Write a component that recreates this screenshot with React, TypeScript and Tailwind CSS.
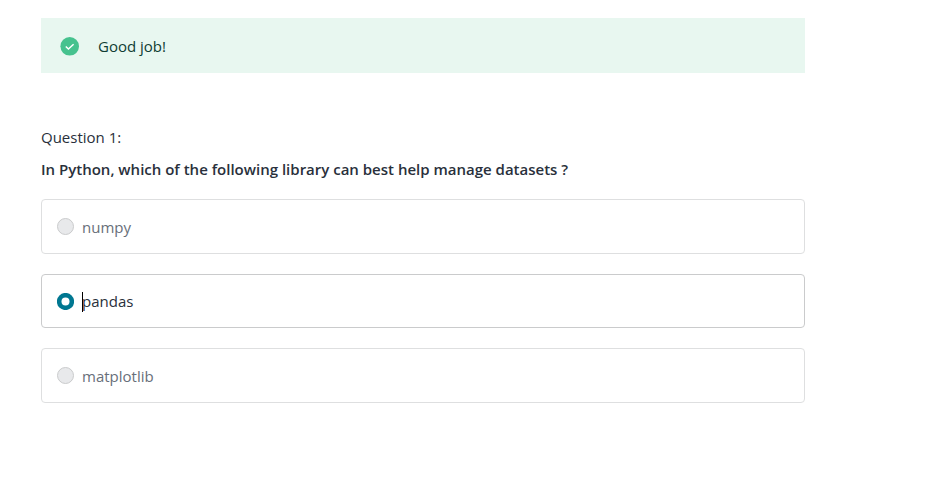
const options = [
  { label: "numpy", selected: false, row: "h-[55px]" },
  { label: "pandas", selected: true, row: "h-[54px]" },
  { label: "matplotlib", selected: false, row: "h-[55px]" },
];

function Radio({ selected }: { selected: boolean }) {
  return selected ? (
    <svg className="size-[17px] shrink-0" viewBox="0 0 17 17">
      <circle cx="8.5" cy="8.5" r="8.6" fill="#007791" />
      <circle cx="8.5" cy="8.5" r="4" fill="white" />
    </svg>
  ) : (
    <span className="size-[17px] shrink-0 rounded-full border border-[#cacbcc] bg-[#e8e9eb]" />
  );
}

export default function App() {
  return (
    <main className="h-[488px] w-full bg-white pt-[18px] pl-[41px] font-['Open_Sans',sans-serif] text-[15px] leading-[22px] text-[#29303b]">
      <div className="w-[764px]">
        <div className="flex h-[55px] items-center bg-[#e8f7f0] pl-[19px]">
          <svg className="mt-[2px] size-[19px]" viewBox="0 0 19 19" fill="none">
            <circle cx="9.7" cy="9.3" r="9.3" fill="#46c28e" />
            <path d="M5.8 9.5 8.4 12 13.6 7.2" stroke="white" strokeWidth="1.5" />
          </svg>
          <span className="ml-[19px] text-[#0f3d33]">Good job!</span>
        </div>
        <p className="mt-[53px]">Question 1:</p>
        <h1 className="mt-[10px] text-[15px] font-semibold">
          In Python, which of the following library can best help manage datasets ?
        </h1>
        <div className="mt-[19px] flex flex-col gap-5">
          {options.map((o) => (
            <label
              key={o.label}
              className={`flex items-center rounded-[4px] border pl-[15px] ${o.row} ${
                o.selected ? "border-[#cacbcc]" : "border-[#dedfe0] text-[#686f7a]"
              }`}
            >
              <Radio selected={o.selected} />
              <span className="relative ml-2">
                {o.selected && <span className="absolute top-[2px] left-0 h-5 w-px bg-black" />}
                {o.label}
              </span>
            </label>
          ))}
        </div>
      </div>
    </main>
  );
}
